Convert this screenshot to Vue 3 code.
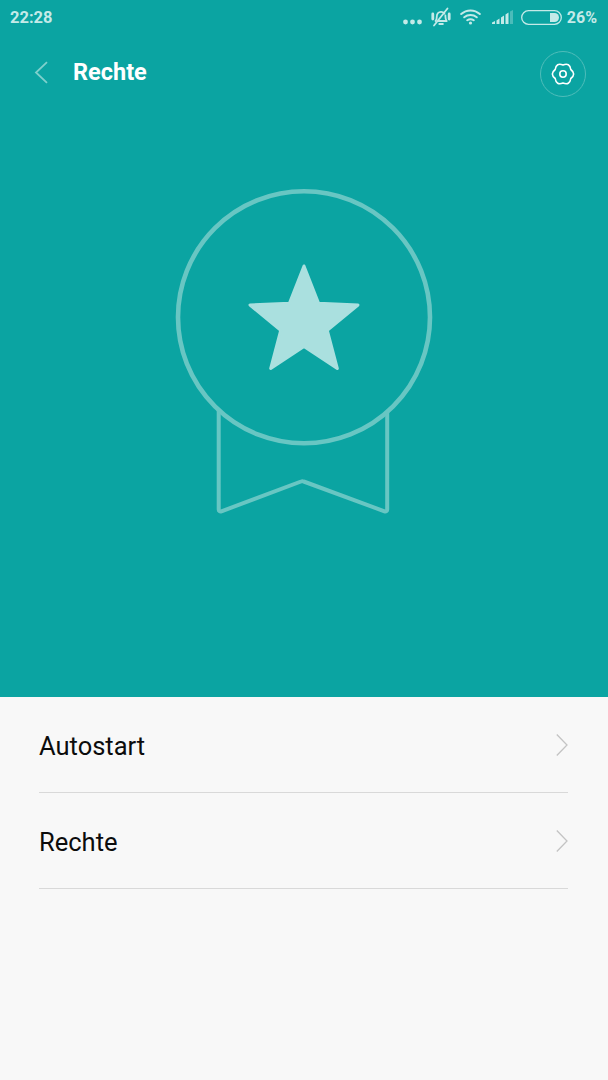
<script setup>
const rows = ['Autostart', 'Rechte']
</script>

<template>
  <div class="page">
    <section class="hero">
      <div class="status">
        <span class="time">22:28</span>
        <div class="status-right">
          <svg class="dots" width="19" height="6" viewBox="0 0 19 6"><circle cx="2.500" cy="3" r="2.400"/><circle cx="9.500" cy="3" r="2.400"/><circle cx="16.500" cy="3" r="2.400"/></svg>
          <svg class="mute" width="20" height="20" viewBox="0 0 20 20" fill="none" stroke="#c4eae8" stroke-width="1.800" stroke-linecap="round" stroke-linejoin="round">
            <path d="M4.500 14c1.200-1 1.300-2.200 1.300-4.500 0-2.600 1.800-4.700 4.200-4.700 1.400 0 2.600.6 3.400 1.700M14.400 8.500v1c0 2 .4 3.400 1.300 4.500H7.500"/>
            <path d="M8.300 17h3.600"/><path d="M3 18.500 16.500 1.500"/>
            <path d="M1.800 7v5M18.200 7v5" stroke-width="2.800"/>
          </svg>
          <svg class="wifi" width="21" height="16" viewBox="0 0 21 16" fill="none" stroke="#c4eae8" stroke-width="2" stroke-linecap="round">
            <path d="M1.200 5C6.500 .2 14.500 .2 19.800 5"/><path d="M4.200 8.300c3.700-3 8.900-3 12.600 0"/><path d="M7.200 11.300c2-1.400 4.600-1.400 6.600 0"/><circle cx="10.500" cy="14" r="1.600" fill="#c4eae8" stroke="none"/>
          </svg>
          <svg class="signal" width="21" height="15" viewBox="0 0 21 15" fill="#c4eae8"><path d="M0 14v-1.500L3 11v3zM4.500 14V10.500L7.500 8.500V14zM9 14V7.500L12 5.500V14zM13.500 14V4.500L16.500 2.500V14z"/><path d="M18 14V1.500L21 0V14z" opacity=".35"/></svg>
          <svg class="battery" width="41" height="15" viewBox="0 0 41 15" fill="none"><rect x=".7" y=".7" width="39.600" height="13.600" rx="6.800" stroke="#c4eae8" stroke-width="1.300"/><path d="M29 3h4.500a4.500 4.500 0 0 1 0 9H29z" fill="#c4eae8"/></svg>
          <span class="pct">26%</span>
        </div>
      </div>

      <header class="bar">
        <button class="back" aria-label="Zurück">
          <svg width="14" height="23" viewBox="0 0 14 23" fill="none" stroke="#7fd0cc" stroke-width="1.800"><path d="M13 1.200 2 11.500l11 10.300"/></svg>
        </button>
        <h1 class="title">Rechte</h1>
        <button class="gear" aria-label="Einstellungen">
          <svg width="24" height="24" viewBox="0 0 24 24" fill="none" stroke="#ffffff" stroke-width="1.600" stroke-linejoin="round">
            <path d="M12 3Q18.750 .3 19.800 7.500Q25.500 12 19.800 16.500Q18.750 23.700 12 21Q5.250 23.700 4.200 16.500Q-1.500 12 4.200 7.500Q5.250 .3 12 3Z"/>
            <circle cx="12" cy="12" r="3.200"/>
          </svg>
        </button>
      </header>

      <div class="badge-wrap">
        <svg class="badge" width="260" height="328" viewBox="0 0 260 328" fill="none">
          <path d="M44.700 218V321.500c0 1.500 1.200 2.300 2.700 1.800L127 293.500c1-.4 1.700-.4 2.700 0L210.500 323.300c1.500.5 2.700-.3 2.700-1.800V218" stroke="#68c6c3" stroke-width="4" stroke-linejoin="round"/>
          <circle cx="130" cy="129.300" r="126" stroke="#68c6c3" stroke-width="4.600" fill="#0ba4a2"/>
          <path d="M130 78 144.600 115.300 184 117 153.300 142.300 163.300 180.500 130 158.500 96.700 180.500 106.700 142.300 76 117 115.400 115.300Z" fill="#aae0df" stroke="#aae0df" stroke-width="3" stroke-linejoin="round"/>
        </svg>
      </div>
    </section>

    <ul class="list">
      <li v-for="row in rows" :key="row" class="row">
        <span class="label">{{ row }}</span>
        <svg class="chev" width="12" height="24" viewBox="0 0 12 24" fill="none" stroke="#c4c4c4" stroke-width="1.300"><path d="M.8 1.500 11 12 .8 22.500"/></svg>
      </li>
    </ul>
  </div>
</template>

<style>
html, body { margin: 0; padding: 0; background: #f8f8f8; }
</style>

<style scoped>
.page { width: 608px; height: 1080px; display: flex; flex-direction: column; background: #f8f8f8; font-family: Roboto, "Liberation Sans", sans-serif; overflow: hidden; }
.hero { height: 697px; background: #0ba4a2; display: flex; flex-direction: column; flex: none; }
.status { height: 34px; display: flex; align-items: center; justify-content: space-between; padding: 0 11px 0 10px; color: #c4eae8; font-weight: 500; font-size: 16px; }
.time { font-size: 16.500px; font-weight: 700; }
.status-right { display: flex; align-items: center; }
.dots { fill: #c4eae8; margin-top: 9px; }
.mute { margin-left: 9px; }
.wifi { margin-left: 9px; }
.signal { margin-left: 11px; }
.battery { margin-left: 8px; }
.pct { margin-left: 5px; font-weight: 700; }
.bar { height: 76px; display: flex; align-items: center; padding: 0 22px 0 34px; box-sizing: border-box; }
.back { background: none; border: 0; padding: 0; width: 39px; display: flex; }
.title { margin: 0; flex: 1; color: #fff; font-size: 23.500px; font-weight: 700; }
.gear { width: 46px; height: 46px; margin-top: 4px; border-radius: 50%; border: 1px solid #4fbdba; background: none; padding: 0; display: flex; align-items: center; justify-content: center; box-sizing: border-box; }
.badge-wrap { display: flex; justify-content: center; padding-top: 78px; }
.badge { display: block; }
.list { list-style: none; margin: 0; padding: 0 40px 0 39px; }
.row { height: 95px; border-bottom: 1px solid #d9d9d9; display: flex; align-items: center; justify-content: space-between; }
.label { font-size: 25.500px; color: #0c0c0c; padding-top: 2px; }
.chev { margin-right: 0; }
</style>
